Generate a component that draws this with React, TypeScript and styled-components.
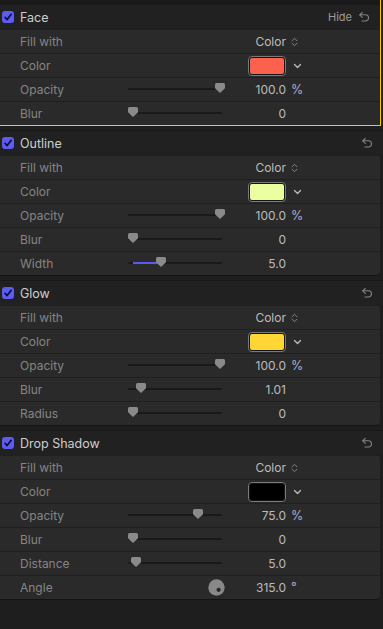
import React from 'react'
import styled, { createGlobalStyle } from 'styled-components'

type Row =
  | { kind: 'fill'; label: string }
  | { kind: 'color'; label: string; color: string }
  | { kind: 'slider'; label: string; pos: number; value: string; unit?: string; fill?: boolean }
  | { kind: 'angle'; label: string; value: string }

type Section = { title: string; highlighted?: boolean; hide?: boolean; rows: Row[] }

const sections: Section[] = [
  {
    title: 'Face',
    highlighted: true,
    hide: true,
    rows: [
      { kind: 'fill', label: 'Fill with' },
      { kind: 'color', label: 'Color', color: '#fc614d' },
      { kind: 'slider', label: 'Opacity', pos: 1, value: '100.0', unit: '%' },
      { kind: 'slider', label: 'Blur', pos: 0, value: '0' },
    ],
  },
  {
    title: 'Outline',
    rows: [
      { kind: 'fill', label: 'Fill with' },
      { kind: 'color', label: 'Color', color: '#ebffa1' },
      { kind: 'slider', label: 'Opacity', pos: 1, value: '100.0', unit: '%' },
      { kind: 'slider', label: 'Blur', pos: 0, value: '0' },
      { kind: 'slider', label: 'Width', pos: 0.32, value: '5.0', fill: true },
    ],
  },
  {
    title: 'Glow',
    rows: [
      { kind: 'fill', label: 'Fill with' },
      { kind: 'color', label: 'Color', color: '#ffd634' },
      { kind: 'slider', label: 'Opacity', pos: 1, value: '100.0', unit: '%' },
      { kind: 'slider', label: 'Blur', pos: 0.09, value: '1.01' },
      { kind: 'slider', label: 'Radius', pos: 0, value: '0' },
    ],
  },
  {
    title: 'Drop Shadow',
    rows: [
      { kind: 'fill', label: 'Fill with' },
      { kind: 'color', label: 'Color', color: '#000000' },
      { kind: 'slider', label: 'Opacity', pos: 0.75, value: '75.0', unit: '%' },
      { kind: 'slider', label: 'Blur', pos: 0, value: '0' },
      { kind: 'slider', label: 'Distance', pos: 0.035, value: '5.0' },
      { kind: 'angle', label: 'Angle', value: '315.0' },
    ],
  },
]

const GlobalStyle = createGlobalStyle`
  html, body {
    margin: 0;
    padding: 0;
    background: #1e1e1e;
  }
  body {
    font-family: Inter, 'Noto Sans', sans-serif;
    -webkit-font-smoothing: antialiased;
  }
`

const Panel = styled.div`
  width: 383px;
  display: flex;
  flex-direction: column;
`

const SectionBox = styled.section<{ $highlighted?: boolean }>`
  display: flex;
  flex-direction: column;
  ${(p) =>
    p.$highlighted
      ? `
    margin-right: 2px;
    padding-top: 5px;
    background: #1a1a1a;
    border-right: 1px solid #f8c800;
    border-bottom: 1px solid #f8c800;
  `
      : `
    margin-top: 4px;
    border-top: 1px solid #181818;
  `}
`

const Header = styled.div`
  height: 24px;
  display: flex;
  align-items: center;
  gap: 6px;
  padding: 0 10px 0 2px;
  background: #212121;
`

const Check = styled.span`
  width: 12px;
  height: 12px;
  border-radius: 3px;
  background: #5d5cf1;
  display: flex;
  align-items: center;
  justify-content: center;
`

const Title = styled.span`
  flex: 1;
  font-size: 12.5px;
  color: #cdcdcd;
`

const HeaderTools = styled.div`
  display: flex;
  align-items: center;
  gap: 6px;
  font-size: 11px;
  color: #9c9c9c;
`

const Body = styled.div<{ $highlighted?: boolean }>`
  background: #2a2a2a;
  margin-right: ${(p) => (p.$highlighted ? '0' : '3px')};
  border-radius: ${(p) => (p.$highlighted ? '0' : '0 4px 4px 0')};
  border-bottom: ${(p) => (p.$highlighted ? 'none' : '1px solid #131313')};
  overflow: hidden;
`

const RowBox = styled.div`
  height: 24px;
  box-sizing: border-box;
  display: grid;
  grid-template-columns: 128px 96px 62px 1fr;
  align-items: center;
  border-top: 1px solid #1f1f1f;
`

const Label = styled.span`
  padding-left: 20px;
  font-size: 12px;
  color: #858585;
`

const Value = styled.span`
  grid-column: 3;
  justify-self: end;
  font-size: 12px;
  color: #bcbcbc;
  display: flex;
  align-items: center;
`

const Unit = styled.span`
  grid-column: 4;
  padding-left: 5px;
  font-size: 12.5px;
  color: #aeaed0;
  display: flex;
  align-items: center;
`

const SliderTrack = styled.div`
  grid-column: 2;
  position: relative;
  height: 23px;
`

const TrackLine = styled.div`
  position: absolute;
  top: 10px;
  left: 0;
  width: 94px;
  height: 2px;
  border-radius: 1px;
  background: #1a1a1a;
`

const TrackFill = styled.div`
  position: absolute;
  top: 10px;
  left: 5px;
  height: 2px;
  background: #5a59f2;
`

const Thumb = styled.svg`
  position: absolute;
  top: 5px;
`

const Swatch = styled.span`
  width: 38px;
  height: 20px;
  box-sizing: border-box;
  border: 1px solid #7a7a7a;
  border-radius: 4px;
  display: flex;
`

const SwatchFill = styled.span<{ $color: string }>`
  flex: 1;
  border: 1px solid #151515;
  border-radius: 3px;
  background: ${(p) => p.$color};
`

const Dial = styled.svg`
  grid-column: 2;
  justify-self: end;
  margin-right: -1px;
`

const UndoIcon = () => (
  <svg width="12" height="12" viewBox="0 0 12 12" fill="none" stroke="#858585" strokeWidth="1.1" strokeLinecap="round" strokeLinejoin="round">
    <path d="M4.3 1.3 L1.8 3.8 L4.3 6.3" />
    <path d="M1.8 3.8 H7.4 A3.1 3.1 0 0 1 7.4 10 H4" />
  </svg>
)

const CheckBox = () => (
  <Check>
    <svg width="10" height="10" viewBox="0 0 10 10" fill="none" stroke="#0d0d2a" strokeWidth="1.6" strokeLinecap="round" strokeLinejoin="round">
      <path d="M2 5.3 L4.1 7.6 L8.2 2.3" />
    </svg>
  </Check>
)

const UpDown = () => (
  <svg width="7" height="10" viewBox="0 0 7 10" fill="none" stroke="#858585" strokeWidth="1" strokeLinecap="round" strokeLinejoin="round">
    <path d="M1 3.8 L3.5 1.3 L6 3.8" />
    <path d="M1 6.2 L3.5 8.7 L6 6.2" />
  </svg>
)

const ChevronDown = () => (
  <svg width="9" height="6" viewBox="0 0 9 6" fill="none" stroke="#bdbdbd" strokeWidth="1.3" strokeLinecap="round" strokeLinejoin="round" style={{ marginLeft: 2 }}>
    <path d="M1.5 1.5 L4.5 4.5 L7.5 1.5" />
  </svg>
)

const Slider = ({ pos, fill }: { pos: number; fill?: boolean }) => {
  const left = Math.round(pos * 87)
  return (
    <SliderTrack>
      <TrackLine />
      {fill && <TrackFill style={{ width: left - 3 }} />}
      <Thumb width="10" height="10" viewBox="0 0 10 10" style={{ left }}>
        <path d="M1.5 0 H8.5 Q10 0 10 1.5 V5.3 L5 10 L0 5.3 V1.5 Q0 0 1.5 0 Z" fill="#8a8a8a" />
      </Thumb>
    </SliderTrack>
  )
}

const RowView = ({ row }: { row: Row }) => {
  switch (row.kind) {
    case 'fill':
      return (
        <RowBox>
          <Label>{row.label}</Label>
          <Value>Color</Value>
          <Unit>
            <UpDown />
          </Unit>
        </RowBox>
      )
    case 'color':
      return (
        <RowBox>
          <Label>{row.label}</Label>
          <Value>
            <Swatch>
              <SwatchFill $color={row.color} />
            </Swatch>
          </Value>
          <Unit>
            <ChevronDown />
          </Unit>
        </RowBox>
      )
    case 'slider':
      return (
        <RowBox>
          <Label>{row.label}</Label>
          <Slider pos={row.pos} fill={row.fill} />
          <Value>{row.value}</Value>
          {row.unit && <Unit>{row.unit}</Unit>}
        </RowBox>
      )
    case 'angle':
      return (
        <RowBox>
          <Label>{row.label}</Label>
          <Dial width="17" height="17" viewBox="0 0 17 17">
            <circle cx="8.5" cy="8.5" r="8.2" fill="#888" />
            <circle cx="10.6" cy="10.8" r="2.1" fill="#262626" />
          </Dial>
          <Value>{row.value}</Value>
          <Unit>°</Unit>
        </RowBox>
      )
  }
}

export default function App() {
  return (
    <>
      <GlobalStyle />
      <Panel>
        {sections.map((s) => (
          <SectionBox key={s.title} $highlighted={s.highlighted}>
            <Header>
              <CheckBox />
              <Title>{s.title}</Title>
              <HeaderTools>
                {s.hide && <span>Hide</span>}
                <UndoIcon />
              </HeaderTools>
            </Header>
            <Body $highlighted={s.highlighted}>
              {s.rows.map((r) => (
                <RowView key={r.label} row={r} />
              ))}
            </Body>
          </SectionBox>
        ))}
      </Panel>
    </>
  )
}
